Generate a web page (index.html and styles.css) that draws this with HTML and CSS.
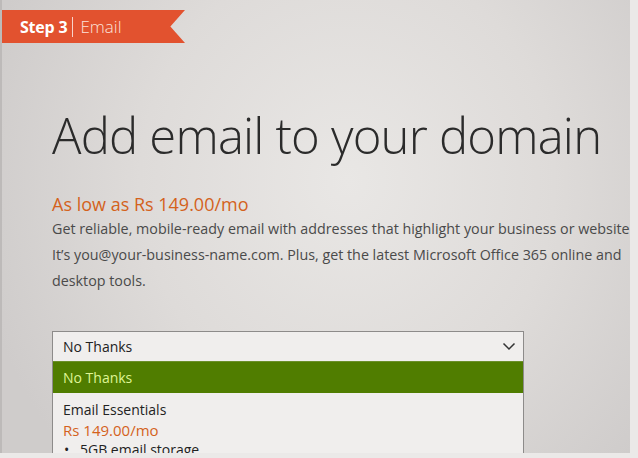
FILE: index.html
```html
<!DOCTYPE html>
<html lang="en">
<head>
    <meta charset="UTF-8">
    <meta name="viewport" content="width=device-width, initial-scale=1.0">
    <title>Add email to your domain</title>
    <link rel="stylesheet" href="styles.css">
</head>
<body>
    <div class="frame">
        <!-- Step ribbon -->
        <div class="step">
            <span class="step-num">Step 3</span>
            <span class="step-sep"></span>
            <span class="step-name">Email</span>
        </div>

        <div class="content">
            <h1 class="title">Add email to your domain</h1>
            <p class="price">As low as Rs 149.00/mo</p>
            <p class="desc">Get reliable, mobile-ready email with addresses that highlight your business or website.<br>It&rsquo;s you@your-business-name.com. Plus, get the latest Microsoft Office 365 online and<br>desktop tools.</p>

            <!-- Plan picker (open) -->
            <div class="picker">
                <div class="picker-box">
                    <span>No Thanks</span>
                    <svg class="chevron" width="14" height="9" viewBox="0 0 14 9"><path d="M1.5 1.5 L7 7 L12.5 1.5" fill="none" stroke="#333" stroke-width="1.5"/></svg>
                </div>
                <div class="picker-list">
                    <div class="option selected">No Thanks</div>
                    <div class="option">
                        <div class="opt-name">Email Essentials</div>
                        <div class="opt-price">Rs 149.00/mo</div>
                        <ul class="opt-feats">
                            <li>5GB email storage</li>
                        </ul>
                    </div>
                </div>
            </div>
        </div>
    </div>
</body>
</html>
```

FILE: styles.css
```css
* {
    margin: 0;
    padding: 0;
    box-sizing: border-box;
}

body {
    background: #ebe9e8;
    font-family: "Open Sans", "Noto Sans", sans-serif;
    width: 638px;
    height: 458px;
    overflow: hidden;
}

.frame {
    width: 630px;
    height: 453px;
    overflow: hidden;
    border-left: 2px solid #bdbab9;
    background: radial-gradient(ellipse 60% 90% at 55% 40%, #e9e7e5 0%, #dedbd9 55%, #cfcccb 100%);
    padding-top: 10px;
}

/* Ribbon */
.step {
    width: 183px;
    height: 33px;
    background: #e2522f;
    clip-path: polygon(0 0, 100% 0, 92% 50%, 100% 100%, 0 100%);
    display: flex;
    align-items: center;
    padding-left: 18px;
    color: #fff;
}

.step-num {
    font-weight: 700;
    font-size: 16px;
    letter-spacing: -0.2px;
}

.step-sep {
    width: 1px;
    height: 20px;
    background: rgba(255, 255, 255, 0.75);
    margin: 0 7px 0 5px;
}

.step-name {
    font-size: 17px;
    font-weight: 300;
    color: #fbe2da;
}

.content {
    padding-left: 50px;
}

.title {
    font-weight: 300;
    font-size: 49px;
    color: #2b2b2b;
    line-height: 60px;
    margin-top: 62px;
    letter-spacing: -0.8px;
    white-space: nowrap;
}

.price {
    color: #d4621c;
    font-size: 18px;
    margin-top: 27px;
    line-height: 24px;
}

.desc {
    color: #4a4a4a;
    font-size: 14.3px;
    line-height: 26px;
    white-space: nowrap;
}

/* Picker */
.picker {
    width: 472px;
    margin-top: 37px;
    border: 1px solid #8d8b8a;
    border-bottom: none;
    background: #f0eeed;
}

.picker-box {
    height: 29px;
    display: flex;
    align-items: center;
    justify-content: space-between;
    padding: 0 7px 0 10px;
    font-size: 14px;
    color: #222;
}

.option {
    padding: 0 10px;
    font-size: 14px;
    color: #222;
}

.option.selected {
    background: #507d00;
    color: #dff595;
    height: 32px;
    line-height: 32px;
    border-top: 1px solid #6b8f2a;
}

.opt-name {
    margin-top: 7px;
    line-height: 20px;
}

.opt-price {
    color: #d4621c;
    font-size: 15px;
    line-height: 20px;
}

.opt-feats {
    list-style: none;
    line-height: 20px;
}

.opt-feats li::before {
    content: "\2022";
    display: inline-block;
    width: 16px;
    margin-left: 1px;
}
```
